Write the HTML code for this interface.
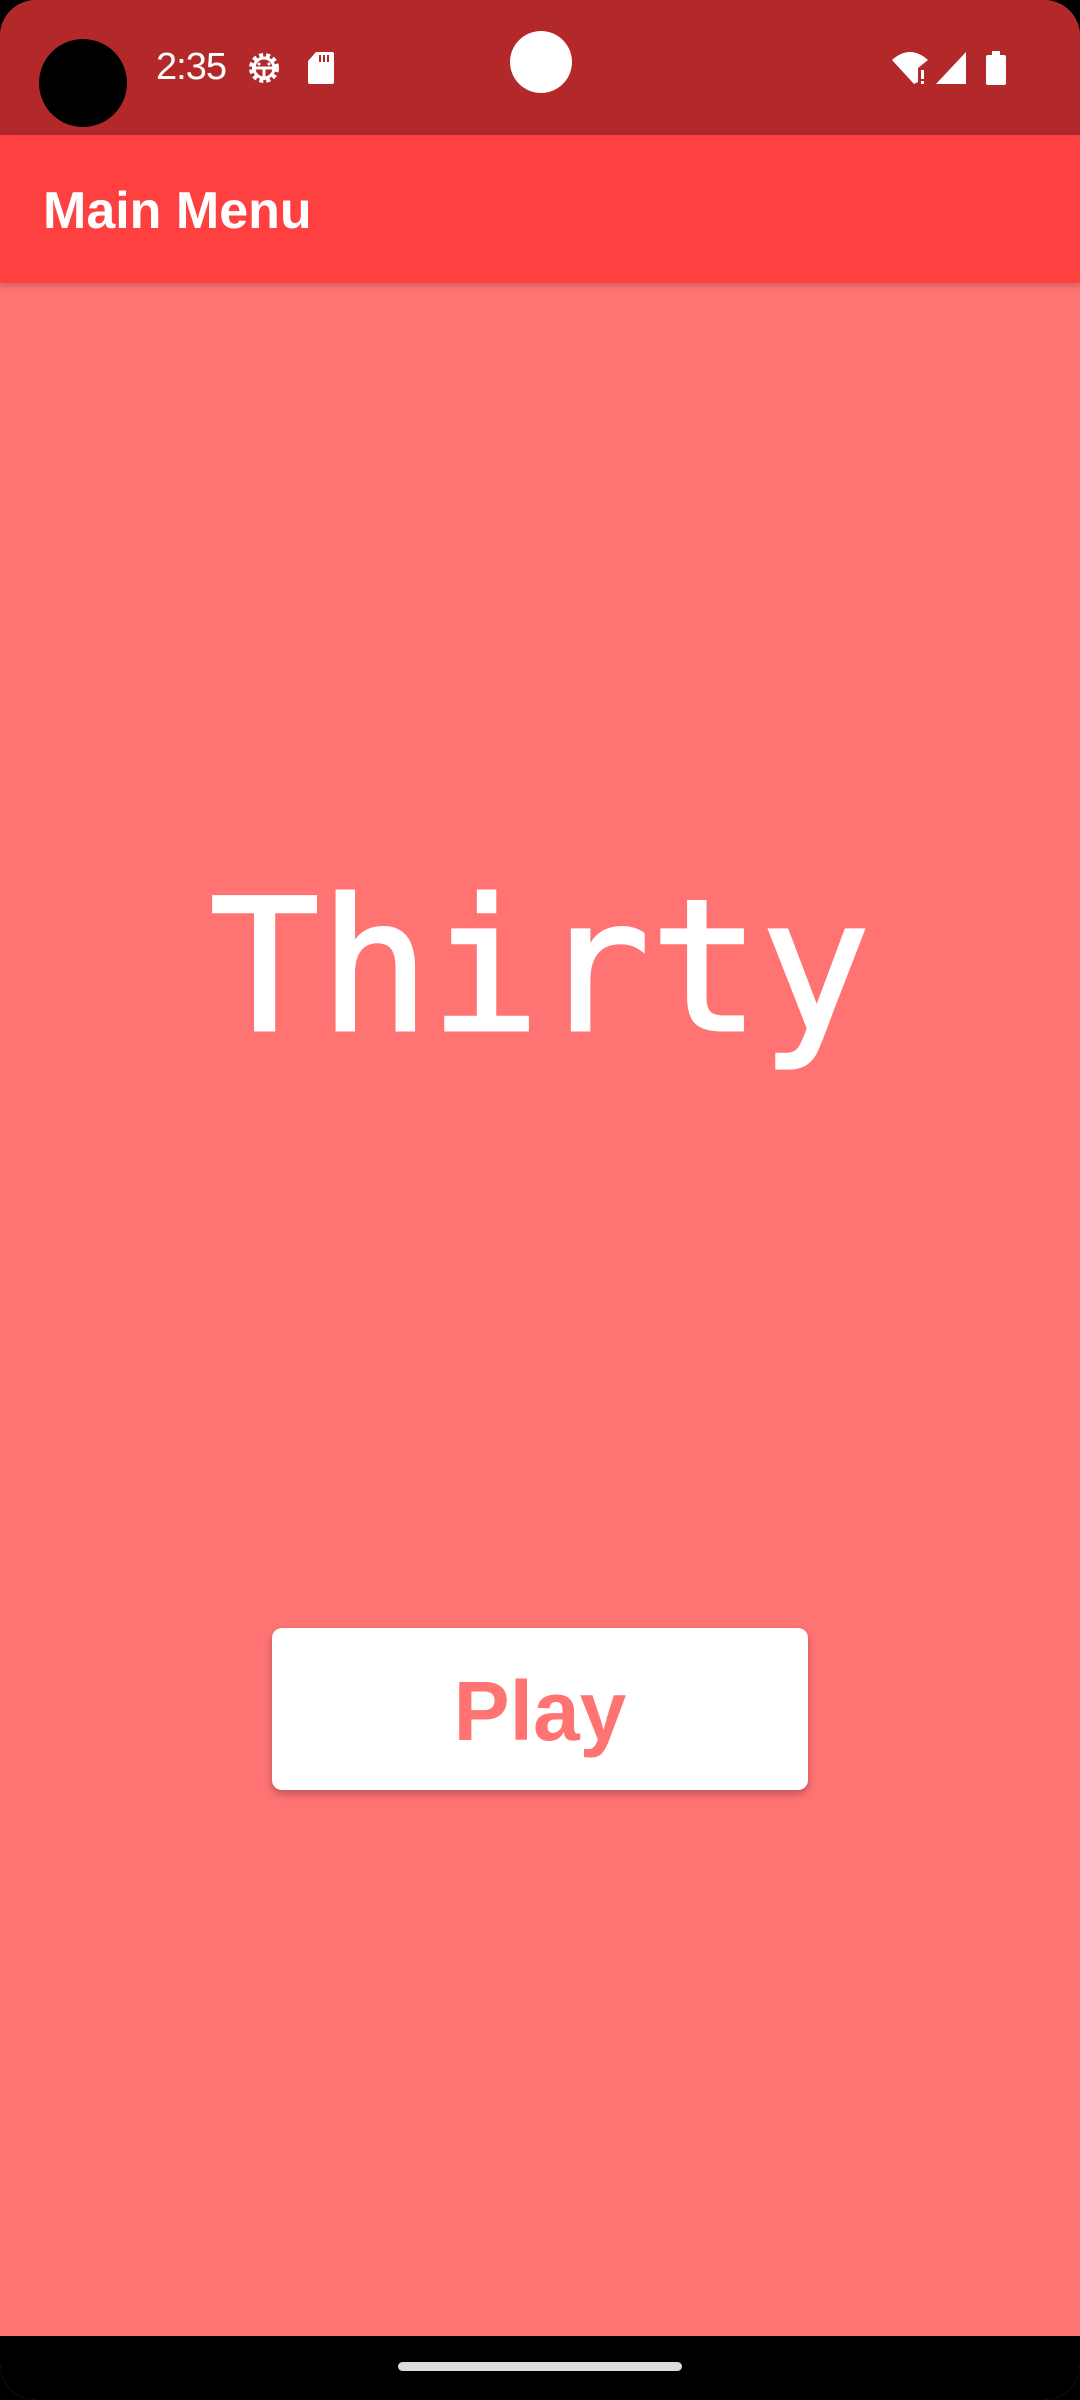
<!DOCTYPE html>
<html><head><meta charset="utf-8"><style>
html,body{margin:0;padding:0;width:1080px;height:2400px;overflow:hidden;background:#000}
.page{position:relative;width:1080px;height:2400px;background:#FF7373;border-radius:36px 36px 36px 36px;overflow:hidden}
.status{position:absolute;left:0;top:0;width:1080px;height:135px;background:#B3292A}
.appbar{position:absolute;left:0;top:135px;width:1080px;height:148px;background:#FF4040;box-shadow:0 3px 6px rgba(0,0,0,.18)}
.appbar span{position:absolute;left:43px;top:46px;font:bold 52px "Liberation Sans",sans-serif;color:#fff}
.title{position:absolute;left:0;width:1080px;top:876px;text-align:center;font:183px "DejaVu Sans Mono","Liberation Mono",monospace;line-height:1;color:#fff;-webkit-text-stroke:3px #fff}
.btn{position:absolute;left:272px;top:1628px;width:536px;height:162px;background:#fff;border-radius:10px;box-shadow:0 4px 8px rgba(0,0,0,.25);text-align:center;font:bold 84px "Liberation Sans",sans-serif;line-height:166px;color:#FF7373}
.nav{position:absolute;left:0;top:2336px;width:1080px;height:64px;background:#000}
.handle{position:absolute;left:398px;top:2362px;width:284px;height:9px;border-radius:5px;background:#ddd}
.time{position:absolute;left:156px;top:46px;font:38px "Liberation Sans",sans-serif;color:#fff;letter-spacing:-1px}
</style></head><body><div class="page">
<div class="status">
<div style="position:absolute;left:39px;top:39px;width:88px;height:88px;border-radius:50%;background:#000"></div>
<div class="time">2:35</div>
<svg style="position:absolute;left:244px;top:50px" width="40" height="36" viewBox="0 0 40 36"><circle cx="20" cy="18" r="13" fill="none" stroke="#fff" stroke-width="4" stroke-dasharray="4 3"/><circle cx="20" cy="18" r="10" fill="none" stroke="#fff" stroke-width="3"/><path d="M8 18H32M20 18V30" stroke="#fff" stroke-width="3"/><circle cx="15" cy="14" r="1.5" fill="#fff"/><circle cx="25" cy="14" r="1.5" fill="#fff"/></svg>
<svg style="position:absolute;left:308px;top:52px" width="26" height="32" viewBox="0 0 26 32"><path d="M8 0H24a2 2 0 0 1 2 2V30a2 2 0 0 1-2 2H2a2 2 0 0 1-2-2V9Z" fill="#fff"/><path d="M12 3v7M16 3v7M20 3v7" stroke="#B3292A" stroke-width="2"/></svg>
<div style="position:absolute;left:510px;top:31px;width:62px;height:62px;border-radius:50%;background:#fff"></div>
<svg style="position:absolute;left:890px;top:50px" width="80" height="36" viewBox="0 0 80 36"><path d="M2 10Q20-6 38 10L28 18V32L24 34Z" fill="#fff"/><rect x="31" y="20" width="3" height="9" fill="#fff"/><rect x="31" y="31" width="3" height="3" fill="#fff"/><path d="M46 34L76 2V34Z" fill="#fff"/></svg>
<svg style="position:absolute;left:986px;top:51px" width="20" height="34" viewBox="0 0 20 34"><rect x="6" y="0" width="8" height="4" fill="#fff"/><rect x="0" y="4" width="20" height="30" rx="2" fill="#fff"/></svg>
</div>
<div class="appbar"><span>Main Menu</span></div>
<div class="title">Thirty</div>
<div class="btn">Play</div>
<div class="nav"></div><div class="handle"></div>
</div></body></html>
